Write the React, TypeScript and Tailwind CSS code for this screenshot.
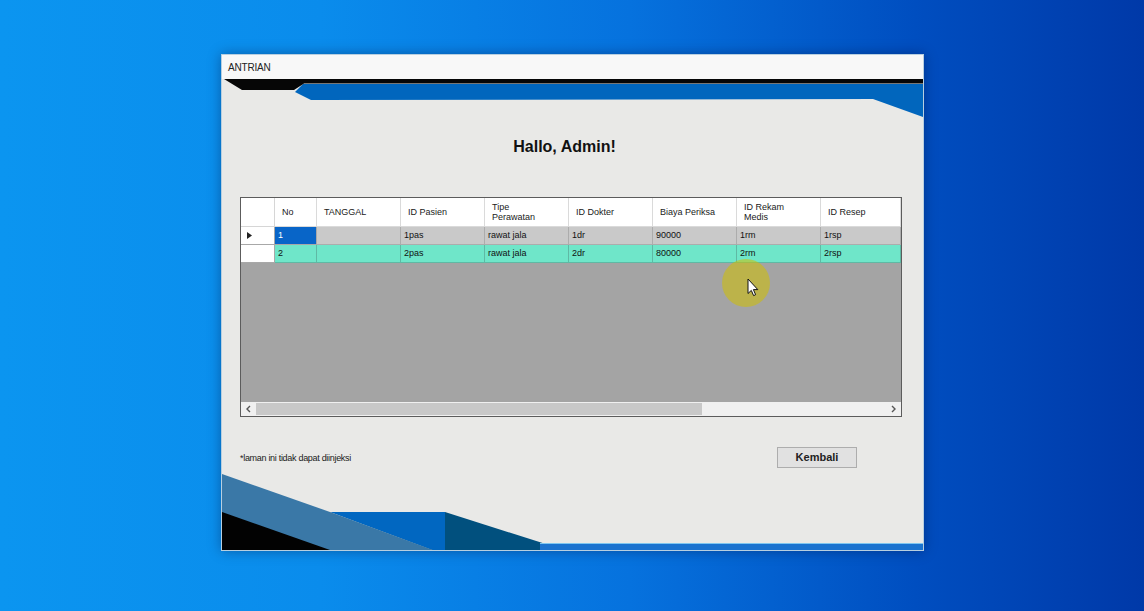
import React from "react";

const headers: string[][] = [
  ["No"],
  ["TANGGAL"],
  ["ID Pasien"],
  ["Tipe", "Perawatan"],
  ["ID Dokter"],
  ["Biaya Periksa"],
  ["ID Rekam", "Medis"],
  ["ID Resep"],
];

const row1 = ["1", "", "1pas", "rawat jala", "1dr", "90000", "1rm", "1rsp"];
const row2 = ["2", "", "2pas", "rawat jala", "2dr", "80000", "2rm", "2rsp"];

function TopDecor() {
  return (
    <svg className="absolute left-0 top-0" width="701" height="40" viewBox="0 0 701 40">
      <polygon points="0,38 701,38 701,0 0,0" fill="none" />
      <polygon points="81,5 701,5 701,38 651,20 89,21 73,13" fill="#0166bd" />
      <polygon points="2,0 701,0 701,4.5 82,4.5 72,11 20,11" fill="#060606" />
    </svg>
  );
}

function BottomDecor() {
  return (
    <svg className="absolute left-0 bottom-0" width="701" height="76" viewBox="0 0 701 76">
      <polygon points="108,38 223,38 223,76 210,76" fill="#0167c1" />
      <polygon points="0,0 108,38 211,76 0,76" fill="#3a78a7" />
      <polygon points="0,38 108,76 0,76" fill="#020202" />
      <polygon points="223,38 330,72 330,76 223,76" fill="#01507e" />
      <rect x="318" y="70" width="383" height="6" fill="#1a72cf" />
      <rect x="318" y="69" width="383" height="1" fill="#7ec6f0" />
    </svg>
  );
}

export default function App() {
  return (
    <div className="relative w-[1144px] h-[611px] overflow-hidden bg-[linear-gradient(90deg,#0b95f0_0%,#0a8cec_28%,#0672de_55%,#004ec0_80%,#0039a8_100%)] pt-[54px] pl-[221px] font-['Liberation_Sans',Arial,sans-serif]">
      <div className="w-[703px] h-[497px] flex flex-col border border-[#b8cfe0] bg-[#e9e9e7] shadow-[0_0_12px_rgba(0,0,40,0.35)]">
        <div className="h-[24px] shrink-0 bg-[#f8f8f8] flex items-center pl-[6px] text-[10px] tracking-[-0.2px] text-[#222]">
          ANTRIAN
        </div>
        <div className="relative flex-1">
          <TopDecor />
          <BottomDecor />
          <div className="relative flex flex-col pl-[18px] pt-[59px]">
            <div className="w-[662px] pr-[13px] text-center text-[16px] leading-[18px] font-bold text-[#111]">
              Hallo, Admin!
            </div>

            <div className="mt-[41px] w-[662px] h-[220px] border border-[#5c5c5c] flex flex-col bg-[#a4a4a4] text-[9px] text-[#111]">
              <div className="grid grid-cols-[34px_42px_84px_84px_84px_84px_84px_84px_80px] h-[29px] bg-white">
                <div className="border-r border-b border-[#d6d6d6]" />
                {headers.map((h, i) => (
                  <div
                    key={i}
                    className="border-r border-b border-[#dadada] flex flex-col justify-center pl-[7px] leading-[10px] text-[#1a1a1a]"
                  >
                    {h.map((l, j) => (
                      <span key={j}>{l}</span>
                    ))}
                  </div>
                ))}
              </div>

              <div className="grid grid-cols-[34px_42px_84px_84px_84px_84px_84px_84px_80px] h-[18px] bg-[#c9c9c9]">
                <div className="bg-white border-r border-b border-[#a8a8a8] flex items-center pl-[6px]">
                  <svg width="5" height="7" viewBox="0 0 5 7">
                    <polygon points="0,0 5,3.5 0,7" fill="#222" />
                  </svg>
                </div>
                {row1.map((c, i) => (
                  <div
                    key={i}
                    className={
                      i === 0
                        ? "bg-[#0865c8] text-white border-r border-b border-[#a8a8a8] flex items-center pl-[3px]"
                        : "border-r border-b border-[#acacac] flex items-center pl-[3px]"
                    }
                  >
                    {c}
                  </div>
                ))}
              </div>

              <div className="grid grid-cols-[34px_42px_84px_84px_84px_84px_84px_84px_80px] h-[18px] bg-[#6fe6c9]">
                <div className="bg-white border-r border-b border-[#a8a8a8]" />
                {row2.map((c, i) => (
                  <div key={i} className="border-r border-b border-[#5fb9a4] flex items-center pl-[3px]">
                    {c}
                  </div>
                ))}
              </div>

              <div className="flex-1 bg-[#a4a4a4]" />

              <div className="h-[14px] bg-[#f0f0f0] flex items-center text-[#555]">
                <div className="w-[15px] h-full flex items-center justify-center">
                  <svg width="5" height="8" viewBox="0 0 5 8">
                    <polyline points="4,1 1,4 4,7" fill="none" stroke="#555" strokeWidth="1.4" />
                  </svg>
                </div>
                <div className="w-[446px] h-[12px] bg-[#c8c8c8]" />
                <div className="flex-1" />
                <div className="w-[15px] h-full flex items-center justify-center">
                  <svg width="5" height="8" viewBox="0 0 5 8">
                    <polyline points="1,1 4,4 1,7" fill="none" stroke="#555" strokeWidth="1.4" />
                  </svg>
                </div>
              </div>
            </div>

            <div className="mt-[30px] w-[662px] pr-[45px] flex items-center justify-between">
              <span className="text-[9px] tracking-[-0.3px] text-[#1a1a1a] mt-[2px]">*laman ini tidak dapat diinjeksi</span>
              <button className="w-[80px] h-[21px] bg-[#e1e1e1] border border-[#adadad] text-[11px] font-bold text-[#222] flex items-center justify-center">
                Kembali
              </button>
            </div>
          </div>
        </div>
      </div>

      <div className="absolute left-[722px] top-[259px] w-[48px] h-[48px] rounded-full bg-[#d0c000]/55" />
      <svg className="absolute left-[747px] top-[278px]" width="13" height="20" viewBox="0 0 13 20">
        <path d="M1 1 L1 15.5 L4.3 12.4 L6.6 17.6 L8.6 16.7 L6.4 11.6 L10.8 11.6 Z" fill="#fff" stroke="#111" strokeWidth="1" strokeLinejoin="round" />
      </svg>
    </div>
  );
}
